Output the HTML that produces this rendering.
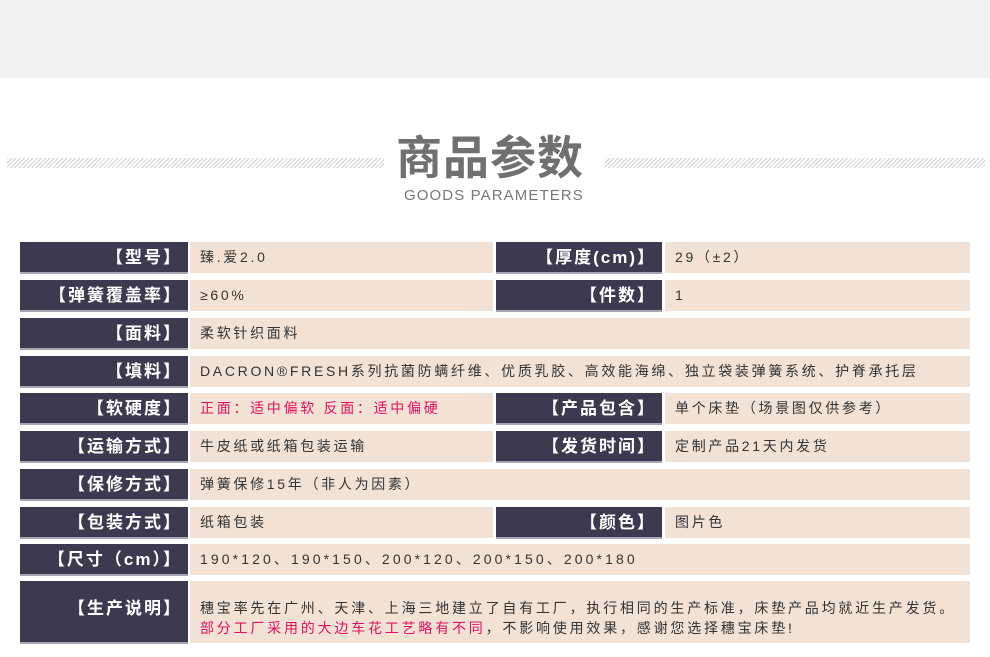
<!DOCTYPE html>
<html><head><meta charset="utf-8"><style>
*{margin:0;padding:0;box-sizing:border-box}
body{width:990px;height:657px;background:#fff;position:relative;overflow:hidden;font-family:"Liberation Sans","Noto Sans CJK SC",sans-serif}
.top{position:absolute;left:0;top:0;width:990px;height:78px;background:#f2f1f1}
.hatch{position:absolute;top:158px;height:10px;background:repeating-linear-gradient(135deg,#cfcfcf 0 1px,#fff 1px 3px)}
.title{position:absolute;left:396px;top:128px;font-size:46px;font-weight:bold;color:#707070;letter-spacing:1px;line-height:60px}
.sub{position:absolute;left:404px;top:187px;font-size:15px;color:#777;letter-spacing:1.1px}
.l{position:absolute;background:#3d3a50;color:#fff;font-size:17px;font-weight:bold;letter-spacing:2px;text-align:right;padding-right:6px;border-bottom:2px solid #a8a6b2}
.v{position:absolute;background:#f2e2d6;color:#333;font-size:14px;padding-left:10px;letter-spacing:2.7px;white-space:nowrap}
.r{color:#e0115f}
</style></head><body>
<div class="top"></div>
<div class="hatch" style="left:7px;width:377px"></div>
<div class="hatch" style="left:605px;width:380px"></div>
<div class="title">商品参数</div>
<div class="sub">GOODS PARAMETERS</div>

<div class="l" style="left:20px;top:242px;width:168px;height:32px;line-height:31px">【型号】</div>
<div class="v" style="left:190px;top:242px;width:303px;height:31px;line-height:31px">臻.爱2.0</div>
<div class="l" style="left:496px;top:242px;width:166px;height:32px;line-height:31px">【厚度(cm)】</div>
<div class="v" style="left:665px;top:242px;width:305px;height:31px;line-height:31px">29（±2）</div>

<div class="l" style="left:20px;top:280px;width:168px;height:32px;line-height:31px">【弹簧覆盖率】</div>
<div class="v" style="left:190px;top:280px;width:303px;height:31px;line-height:31px">≥60%</div>
<div class="l" style="left:496px;top:280px;width:166px;height:32px;line-height:31px">【件数】</div>
<div class="v" style="left:665px;top:280px;width:305px;height:31px;line-height:31px">1</div>

<div class="l" style="left:20px;top:318px;width:168px;height:32px;line-height:31px">【面料】</div>
<div class="v" style="left:190px;top:318px;width:780px;height:31px;line-height:31px">柔软针织面料</div>

<div class="l" style="left:20px;top:356px;width:168px;height:32px;line-height:31px">【填料】</div>
<div class="v" style="left:190px;top:356px;width:780px;height:31px;line-height:31px">DACRON®FRESH系列抗菌防螨纤维、优质乳胶、高效能海绵、独立袋装弹簧系统、护脊承托层</div>

<div class="l" style="left:20px;top:393px;width:168px;height:32px;line-height:31px">【软硬度】</div>
<div class="v r" style="left:190px;top:393px;width:303px;height:31px;line-height:31px">正面：适中偏软 反面：适中偏硬</div>
<div class="l" style="left:496px;top:393px;width:166px;height:32px;line-height:31px">【产品包含】</div>
<div class="v" style="left:665px;top:393px;width:305px;height:31px;line-height:31px">单个床垫（场景图仅供参考）</div>

<div class="l" style="left:20px;top:431px;width:168px;height:32px;line-height:31px">【运输方式】</div>
<div class="v" style="left:190px;top:431px;width:303px;height:31px;line-height:31px">牛皮纸或纸箱包装运输</div>
<div class="l" style="left:496px;top:431px;width:166px;height:32px;line-height:31px">【发货时间】</div>
<div class="v" style="left:665px;top:431px;width:305px;height:31px;line-height:31px">定制产品21天内发货</div>

<div class="l" style="left:20px;top:469px;width:168px;height:32px;line-height:31px">【保修方式】</div>
<div class="v" style="left:190px;top:469px;width:780px;height:31px;line-height:31px">弹簧保修15年（非人为因素）</div>

<div class="l" style="left:20px;top:507px;width:168px;height:32px;line-height:31px">【包装方式】</div>
<div class="v" style="left:190px;top:507px;width:303px;height:31px;line-height:31px">纸箱包装</div>
<div class="l" style="left:496px;top:507px;width:166px;height:32px;line-height:31px">【颜色】</div>
<div class="v" style="left:665px;top:507px;width:305px;height:31px;line-height:31px">图片色</div>

<div class="l" style="left:20px;top:544px;width:168px;height:32px;line-height:31px">【尺寸（cm）】</div>
<div class="v" style="left:190px;top:544px;width:780px;height:31px;line-height:31px;letter-spacing:3.1px">190*120、190*150、200*120、200*150、200*180</div>

<div class="l" style="left:20px;top:581px;width:168px;height:63px;line-height:56px">【生产说明】</div>
<div class="v" style="left:190px;top:581px;width:780px;height:62px;padding-top:17px;line-height:20px;letter-spacing:2.8px">穗宝率先在广州、天津、上海三地建立了自有工厂，执行相同的生产标准，床垫产品均就近生产发货。<br><span class="r">部分工厂采用的大边车花工艺略有不同</span>，不影响使用效果，感谢您选择穗宝床垫!</div>
</body></html>
